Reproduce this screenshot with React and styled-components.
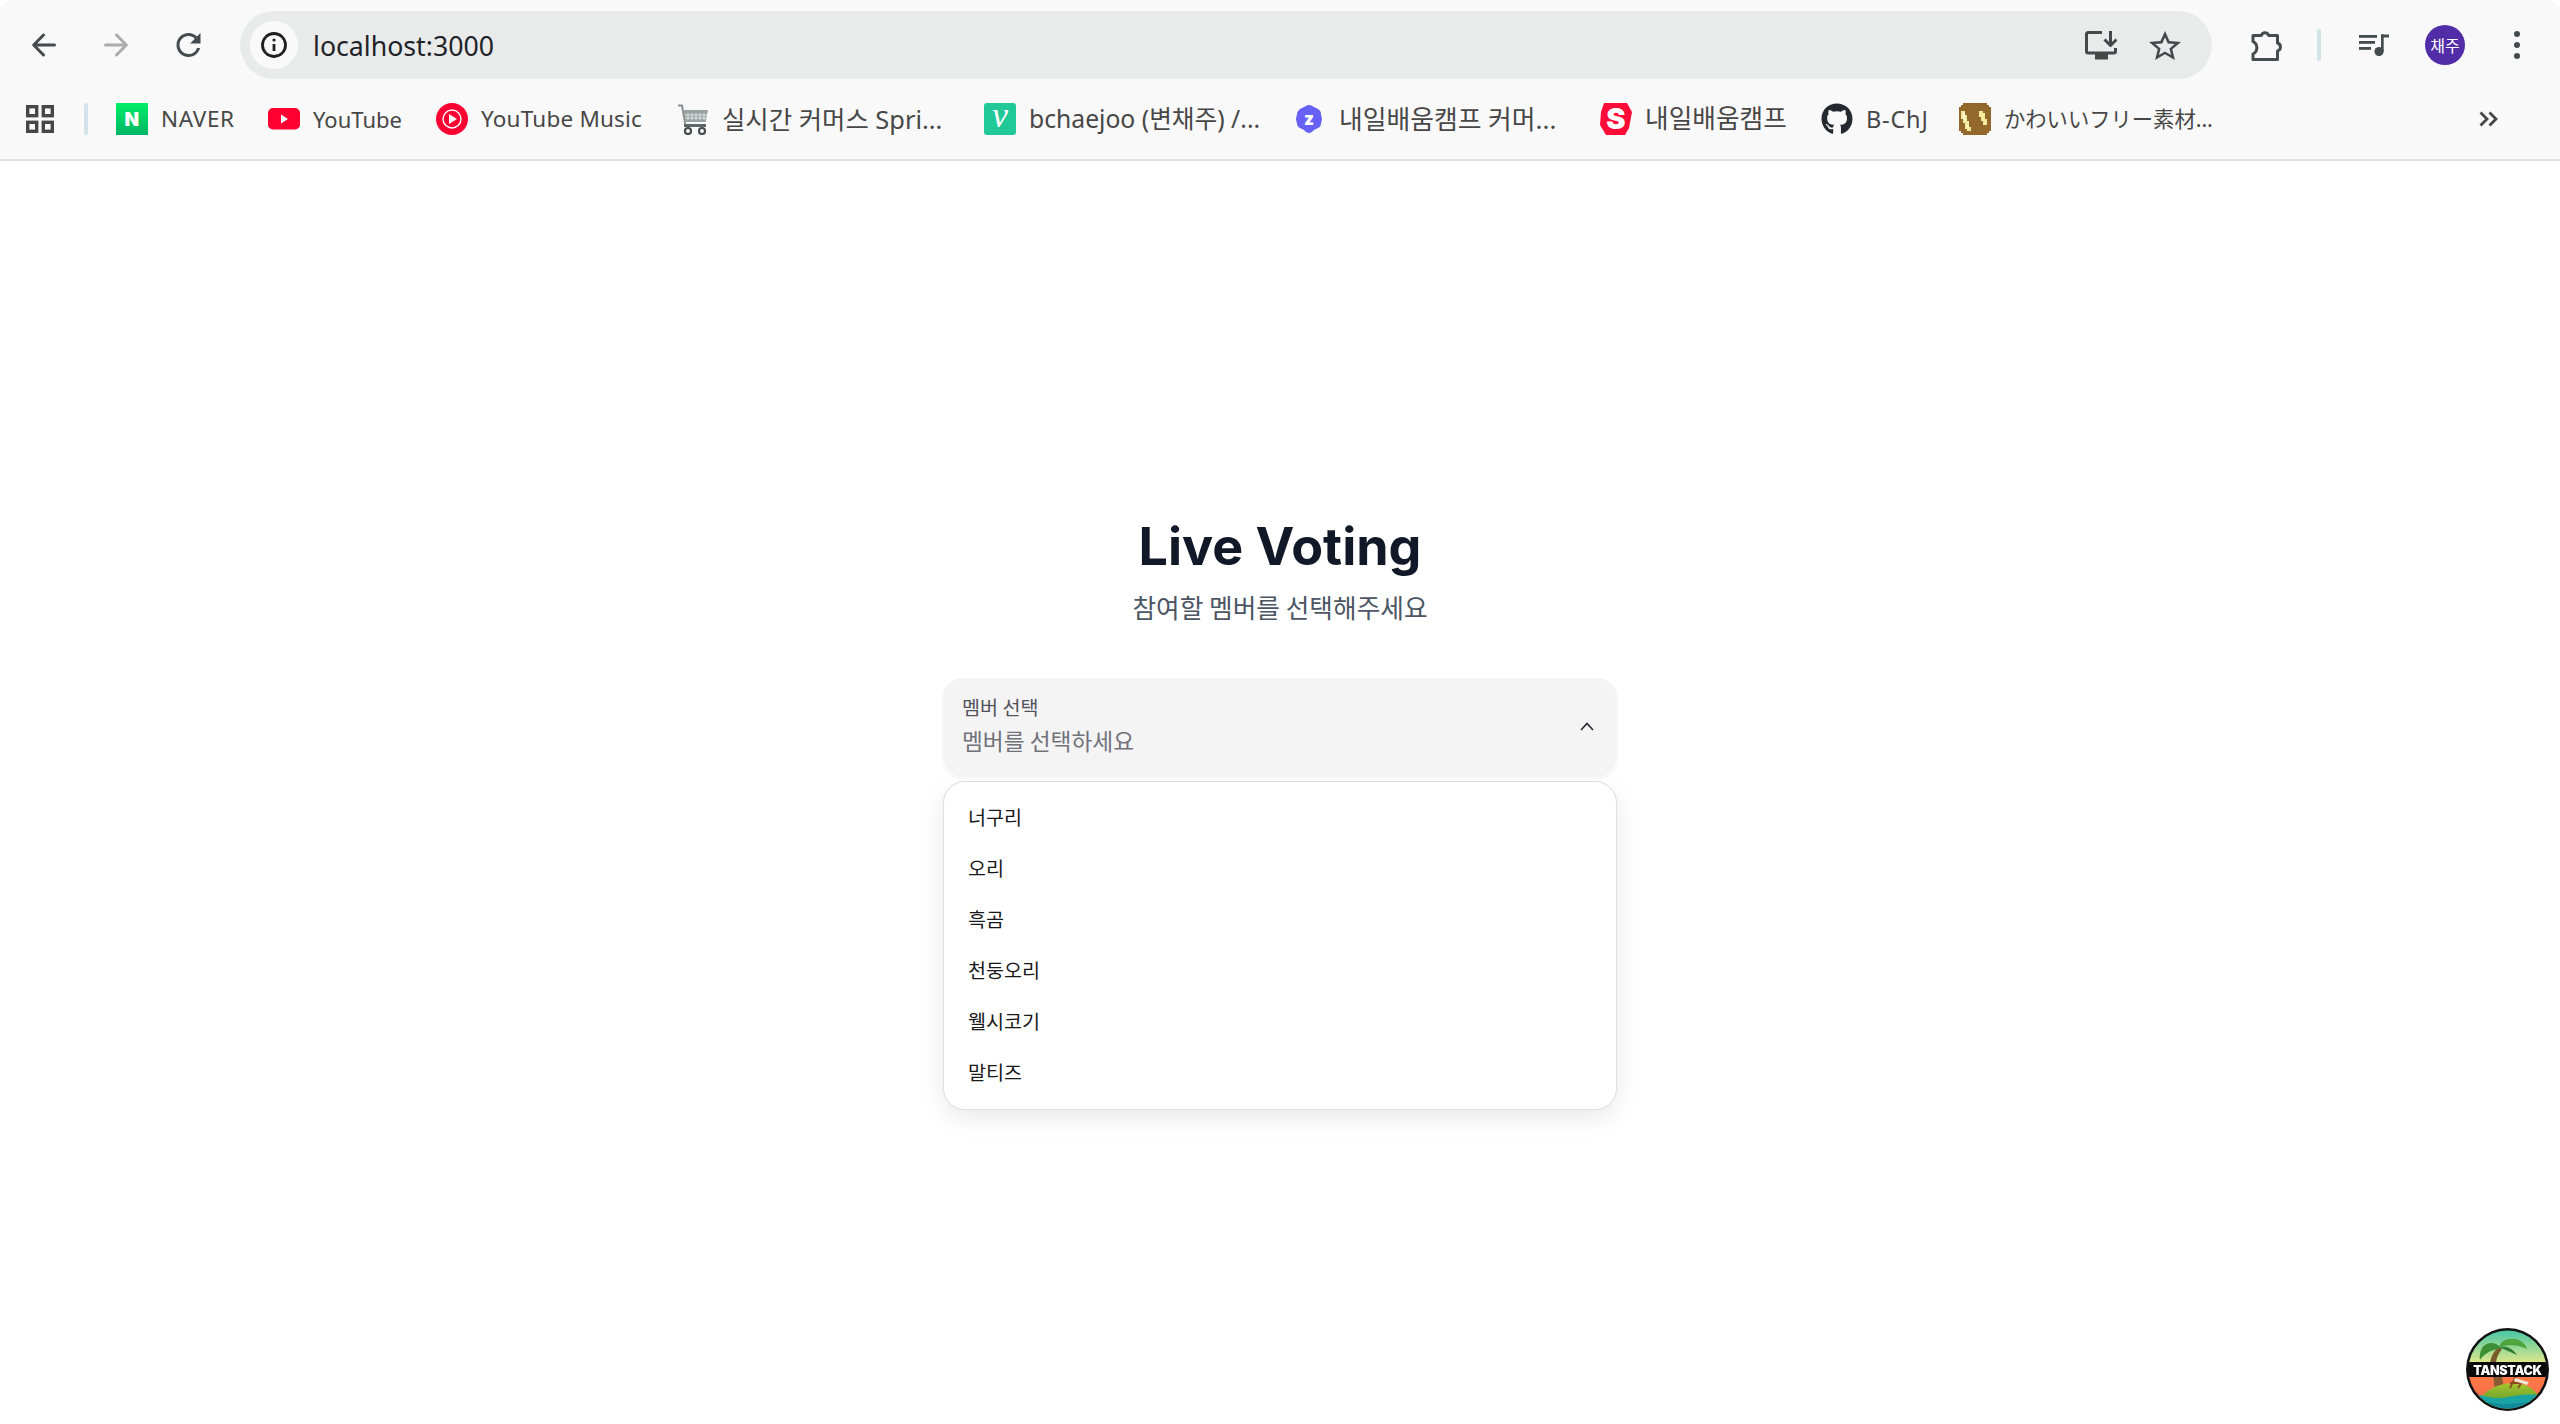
import styled, { createGlobalStyle } from "styled-components";
import { FaGithub } from "react-icons/fa";

const GlobalStyle = createGlobalStyle`
  html, body {
    margin: 0;
    padding: 0;
    background: #fff;
  }
  body {
    font-family: "Noto Sans", "Noto Sans CJK KR", sans-serif;
  }
  * {
    box-sizing: border-box;
  }
`;

const Page = styled.div`
  height: 100vh;
  overflow: hidden;
  display: flex;
  flex-direction: column;
`;

const BrowserChrome = styled.header`
  background: #f9f9f9;
  border-bottom: 2px solid #e2e2e2;
  border-radius: 12px 12px 0 0;
  height: 161px;
  flex-shrink: 0;
`;

const Toolbar = styled.div`
  height: 90px;
  display: flex;
  align-items: center;
  padding-left: 32px;
`;

const NavButton = styled.span`
  width: ${(p) => p.$width || 24}px;
  height: 24px;
  margin-right: ${(p) => p.$gap || 0}px;
  display: flex;
  color: ${(p) => (p.$disabled ? "#acacac" : "#454c4f")};
`;

const Omnibox = styled.div`
  width: 1972px;
  height: 68px;
  margin-left: 39px;
  background: #e9ebeb;
  border-radius: 34px;
  display: flex;
  align-items: center;
  padding: 0 31px 0 10px;
  color: #454749;
`;

const SiteChip = styled.span`
  width: 48px;
  height: 48px;
  border-radius: 50%;
  background: #f9f9f9;
  display: flex;
  align-items: center;
  justify-content: center;
  color: #1f1f1f;
`;

const UrlText = styled.span`
  margin-left: 15px;
  font-size: 26.7px;
  color: #1f2328;
  flex: 1;
`;

const OmniAction = styled.span`
  display: flex;
  margin-left: ${(p) => p.$gap || 0}px;
`;

const ToolbarIcon = styled.span`
  display: flex;
  align-items: center;
  color: #454c4f;
  margin-left: ${(p) => p.$gap}px;
`;

const ToolbarDivider = styled.span`
  width: 4px;
  height: 32px;
  border-radius: 2px;
  background: #d3e3e9;
  margin-left: ${(p) => p.$gap}px;
`;

const Avatar = styled.span`
  width: 40px;
  height: 40px;
  border-radius: 50%;
  background: #512da8;
  color: #fff;
  font-size: 16px;
  margin-left: 36px;
  display: flex;
  align-items: center;
  justify-content: center;
  font-family: "Noto Sans CJK KR", sans-serif;
`;

const MoreDots = styled.span`
  margin-left: 49px;
  display: flex;
  flex-direction: column;
  gap: 5px;

  i {
    width: 6px;
    height: 6px;
    border-radius: 50%;
    background: #454c4f;
  }
`;

const BookmarkBar = styled.nav`
  height: 69px;
  display: flex;
  align-items: flex-start;
  padding: 13px 0 0 26px;
  position: relative;
`;

const AppsButton = styled.span`
  display: flex;
  width: 28px;
  height: 32px;
  align-items: center;
  color: #464646;
`;

const BarDivider = styled.span`
  width: 4px;
  height: 32px;
  border-radius: 2px;
  background: #d3e3e9;
  margin: 0 28px 0 30px;
`;

const Bookmark = styled.a`
  width: ${(p) => p.$width}px;
  height: 32px;
  flex-shrink: 0;
  display: flex;
  align-items: center;
  gap: 13px;
  color: #474747;
  font-size: ${(p) => p.$size}px;
  line-height: 32px;
  white-space: nowrap;
  letter-spacing: ${(p) => p.$spacing || 0}px;
  font-family: ${(p) =>
    p.$jp
      ? '"Noto Sans", "Noto Sans CJK JP", sans-serif'
      : '"Noto Sans", "Noto Sans CJK KR", sans-serif'};
`;

const Favicon = styled.span`
  width: ${(p) => p.$width || 32}px;
  height: 32px;
  flex-shrink: 0;
  display: flex;
  align-items: center;
  color: #24292f;
`;

const LetterLogo = styled.svg`
  overflow: visible;
`;

const OverflowButton = styled.span`
  display: flex;
  margin-left: 266px;
  height: 32px;
  align-items: center;
  color: #464646;
`;

const Main = styled.main`
  flex: 1;
  display: flex;
  flex-direction: column;
  align-items: center;
  padding-top: 356px;
  font-family: Inter, "Noto Sans CJK KR", sans-serif;
`;

const Title = styled.h1`
  margin: 0;
  font-size: 52px;
  line-height: 60px;
  font-weight: 700;
  color: #111827;
`;

const Subtitle = styled.p`
  margin: 12px 0 0;
  font-size: 25.7px;
  line-height: 36px;
  color: #4b5563;
  font-family: "Noto Sans CJK KR", sans-serif;
`;

const SelectWrap = styled.div`
  width: 674px;
  margin-top: 53px;
  position: relative;
  font-family: "Noto Sans CJK KR", sans-serif;
`;

const Trigger = styled.div`
  height: 97px;
  border-radius: 20px;
  background: #f4f4f5;
  box-shadow: 0 2px 4px rgba(0, 0, 0, 0.06);
  padding: 16px 23px 0 19px;
  display: flex;
  align-items: center;
  justify-content: space-between;
`;

const TriggerText = styled.div`
  display: flex;
  flex-direction: column;
  gap: 5px;
  margin-top: -18px;
`;

const TriggerLabel = styled.span`
  font-size: 19.6px;
  line-height: 26px;
  color: #52525b;
`;

const TriggerValue = styled.span`
  font-size: 22.7px;
  line-height: 32px;
  color: #71717a;
`;

const Chevron = styled.span`
  display: flex;
  margin-top: -16px;
  color: #27272a;
`;

const Menu = styled.ul`
  position: absolute;
  top: 103px;
  left: 0;
  right: 0;
  height: 329px;
  margin: 0;
  padding: 10px 0 0 24px;
  list-style: none;
  background: #fff;
  border: 1px solid #dedee0;
  border-radius: 22px;
  box-shadow: 0 8px 24px rgba(0, 0, 0, 0.09);
`;

const MenuItem = styled.li`
  height: 51px;
  line-height: 50px;
  font-size: 19.6px;
  color: #18181b;
`;

const DevtoolsBadge = styled.button`
  position: fixed;
  right: 11px;
  bottom: 13px;
  width: 83px;
  height: 83px;
  padding: 0;
  border: 0;
  background: none;
  display: flex;
`;

const BackIcon = () => (
  <svg width="24" height="24" viewBox="0 0 24 24" fill="none" stroke="currentColor" strokeWidth="3" strokeLinecap="round" strokeLinejoin="round">
    <path d="M22.5 12H2M11.5 2 1.7 12l9.8 10" />
  </svg>
);

const ForwardIcon = () => (
  <svg width="24" height="24" viewBox="0 0 24 24" fill="none" stroke="currentColor" strokeWidth="3" strokeLinecap="round" strokeLinejoin="round">
    <path d="M1.5 12H22M12.5 2l9.8 10-9.8 10" />
  </svg>
);

const ReloadIcon = () => (
  <svg width="25" height="24" viewBox="4 4 16 16" fill="currentColor">
    <path d="M17.65 6.35A7.958 7.958 0 0 0 12 4c-4.42 0-7.99 3.58-7.99 8s3.57 8 7.99 8c3.73 0 6.84-2.55 7.73-6h-2.08A5.99 5.99 0 0 1 12 18c-3.31 0-6-2.69-6-6s2.69-6 6-6c1.66 0 3.14.69 4.22 1.78L13 11h7V4l-2.35 2.35z" />
  </svg>
);

const InfoIcon = () => (
  <svg width="26" height="26" viewBox="0 0 26 26" fill="none" stroke="currentColor">
    <circle cx="13" cy="13" r="11.5" strokeWidth="2.8" />
    <path d="M13 12v7" strokeWidth="2.8" />
    <circle cx="13" cy="8" r="1.6" fill="currentColor" stroke="none" />
  </svg>
);

const InstallIcon = () => (
  <svg width="32" height="29" viewBox="0 0 32 29" fill="none" stroke="currentColor" strokeWidth="3" strokeLinejoin="round">
    <path d="M17 1.5H3A1.5 1.5 0 0 0 1.5 3v17.5A1.5 1.5 0 0 0 3 22h26a1.5 1.5 0 0 0 1.5-1.5V17" />
    <path d="M25.5 0v14M19.5 8.5l6 6 6-6" />
    <rect x="10" y="23" width="13" height="5.5" fill="currentColor" stroke="none" />
  </svg>
);

const StarIcon = () => (
  <svg width="32" height="29" viewBox="2 2 20 19" fill="currentColor" preserveAspectRatio="none">
    <path d="M22 9.24l-7.19-.62L12 2 9.19 8.63 2 9.24l5.46 4.73L5.82 21 12 17.27 18.18 21l-1.63-7.03L22 9.24zM12 15.4l-3.76 2.27 1-4.28-3.32-2.88 4.38-.38L12 6.1l1.71 4.04 4.38.38-3.32 2.88 1 4.28L12 15.4z" />
  </svg>
);

const PuzzleIcon = () => (
  <svg width="32" height="32" viewBox="0 0 32 32" fill="none" stroke="currentColor" strokeWidth="3" strokeLinejoin="round">
    <path d="M2 6.5h8.5a3.6 3.6 0 0 1 7 0h9v7.5a4.2 4.2 0 0 1 0 8v8.5H2V25a7 7 0 0 0 0-12.5z" />
  </svg>
);

const MediaIcon = () => (
  <svg width="30" height="22" viewBox="0 0 30 22" fill="currentColor">
    <rect x="0" y="1" width="18" height="2.8" />
    <rect x="0" y="7" width="16" height="2.8" />
    <rect x="0" y="13" width="12" height="2.8" />
    <circle cx="20" cy="17.5" r="4.6" />
    <rect x="22" y="0.5" width="2.7" height="17" />
    <rect x="22" y="0.5" width="8" height="3" />
  </svg>
);

const AppsIcon = () => (
  <svg width="28" height="28" viewBox="0 0 28 28" fill="none" stroke="currentColor" strokeWidth="3.4">
    <rect x="1.7" y="1.7" width="9" height="9" />
    <rect x="17.3" y="1.7" width="9" height="9" />
    <rect x="1.7" y="17.3" width="9" height="9" />
    <rect x="17.3" y="17.3" width="9" height="9" />
  </svg>
);

const OverflowIcon = () => (
  <svg width="20" height="16" viewBox="0 0 20 16" fill="none" stroke="currentColor" strokeWidth="2.8">
    <path d="M1.5 1.5 8 8l-6.5 6.5M10.5 1.5 17 8l-6.5 6.5" />
  </svg>
);

const ChevronUpIcon = () => (
  <svg width="14" height="9" viewBox="0 0 14 9" fill="none" stroke="currentColor" strokeWidth="1.6">
    <path d="M1 8l6-6.5L13 8" />
  </svg>
);

const NaverIcon = () => (
  <svg width="32" height="32" viewBox="0 0 32 32">
    <defs>
      <linearGradient id="naver" x1="0" y1="0" x2="0" y2="1">
        <stop offset="0" stopColor="#00ee68" />
        <stop offset="1" stopColor="#00b564" />
      </linearGradient>
    </defs>
    <rect width="32" height="32" fill="url(#naver)" />
    <text x="16" y="23" textAnchor="middle" fontSize="19" fontWeight="900" fill="#fff" fontFamily="Inter, sans-serif">N</text>
  </svg>
);

const YoutubeIcon = () => (
  <svg width="32" height="22" viewBox="0 0 32 22">
    <rect width="32" height="21.5" rx="5" fill="#ff0033" />
    <path d="M13 6.5v9l7-4.5z" fill="#fff" />
  </svg>
);

const YoutubeMusicIcon = () => (
  <svg width="32" height="32" viewBox="0 0 32 32">
    <circle cx="16" cy="16" r="16" fill="#ff0033" />
    <circle cx="16" cy="16" r="9" fill="none" stroke="#fff" strokeWidth="1.4" />
    <path d="M13 11v10l8-5z" fill="#fff" />
  </svg>
);

const CartIcon = () => (
  <svg width="32" height="31" viewBox="0 0 32 31">
    <path d="M1 1.5h4l3.5 20h20" fill="none" stroke="#8a9090" strokeWidth="2" />
    <path d="M6.5 6H31l-2.5 12H8.5z" fill="#9aa3a3" />
    <path d="M11 9v7M15 9v7M19 9v7M23 9v7M27 9v7M8 11h22M8 14h21" stroke="#dde2e2" strokeWidth="1" />
    <rect x="7" y="20" width="22" height="3" fill="#5f6666" />
    <circle cx="11" cy="27" r="3" fill="#fff" stroke="#454c4c" strokeWidth="2.2" />
    <circle cx="25" cy="27" r="3" fill="#fff" stroke="#454c4c" strokeWidth="2.2" />
  </svg>
);

const VelogIcon = () => (
  <LetterLogo width="32" height="32" viewBox="0 0 32 32">
    <rect width="32" height="32" rx="3" fill="#20c997" />
    <text x="16" y="24" textAnchor="middle" fontSize="36" fontStyle="italic" fill="#fff" fontFamily='"Liberation Serif", serif'>v</text>
  </LetterLogo>
);

const ZepIcon = () => (
  <svg width="26" height="28" viewBox="0 0 26 28">
    <path d="M13 0c3 0 4 2 7 3s5 3 5 6 1 3 1 5-1 3-1 5-2 4-5 5-4 4-7 4-4-3-7-4-5-3-5-5-1-3-1-5 1-3 1-5 2-5 5-6 4-3 7-3z" fill="#6760f5" />
    <text x="13" y="20" textAnchor="middle" fontSize="17" fontWeight="900" fill="#fff" fontFamily="Inter, sans-serif">z</text>
  </svg>
);

const SpartaIcon = () => (
  <LetterLogo width="32" height="32" viewBox="0 0 32 32">
    <path d="M4 0h23l5 9-3 16-4 7H6L0 22l1-13z" fill="#ff0b37" />
    <text x="16" y="26" textAnchor="middle" fontSize="29" fontWeight="900" fill="#fff" fontFamily="Inter, sans-serif">S</text>
  </LetterLogo>
);

const PixelIcon = () => (
  <svg width="32" height="32" viewBox="0 0 16 16" shapeRendering="crispEdges">
    <path d="M2 0h12v1h1v1h1v12h-1v1h-1v1H2v-1H1v-1H0V2h1V1h1z" fill="#92692b" />
    <path d="M1 4h2v2h1v3h1v3h1v2H4v-1H3v-3H2V8H1z" fill="#f7ea9c" />
    <path d="M2 5h1v3h1v3h1v1H4V9H3V8H2z" fill="#fffbe0" />
    <path d="M10 4h2v1h1v3h1v3h-2V9h-1V7h-1z" fill="#f7ea9c" />
  </svg>
);

const TanstackLogo = () => (
  <svg width="83" height="83" viewBox="0 0 83 83">
    <defs>
      <linearGradient id="sky" x1="0" y1="0" x2="0" y2="1">
        <stop offset="0" stopColor="#3cc4a6" />
        <stop offset="1" stopColor="#e3e88a" />
      </linearGradient>
      <linearGradient id="sunset" x1="0" y1="0" x2="0" y2="1">
        <stop offset="0" stopColor="#ff7a45" />
        <stop offset="1" stopColor="#f7644f" />
      </linearGradient>
      <linearGradient id="island" x1="0" y1="0" x2="0" y2="1">
        <stop offset="0" stopColor="#a6c52e" />
        <stop offset="1" stopColor="#4c8f2c" />
      </linearGradient>
      <clipPath id="disc">
        <circle cx="41.5" cy="41.5" r="39" />
      </clipPath>
    </defs>
    <circle cx="41.5" cy="41.5" r="41.5" fill="#111" />
    <g clipPath="url(#disc)">
      <rect width="83" height="36" fill="url(#sky)" />
      <rect y="48" width="83" height="35" fill="url(#sunset)" />
      <path d="M24 36c1-9 5-14 9-17l3 2c-3 4-6 9-6 15z" fill="#7a5a2a" />
      <path d="M34 19c-5-6-14-5-18 1-2 4-3 8-2 12 4-6 10-10 19-11z" fill="#3c8f35" />
      <path d="M33 19c2-8 12-10 20-7 4 2 7 5 8 9-8-4-17-5-28-2z" fill="#4da53c" />
      <path d="M33 19c6-2 14 1 18 8-6-3-12-5-18-8z" fill="#2f7c32" />
      <path d="M27 48h9l2 14h-9z" fill="#8a5a33" />
      <path d="M12 72c8-10 20-17 36-17 10 0 18 4 24 12v16H12z" fill="url(#island)" />
      <path d="M0 68c12-4 22 3 34 2s24-6 49-2v15H0z" fill="#1aa3a3" />
      <path d="M8 75c12-3 22 2 34 1s20-3 34-1v8H8z" fill="#128a9a" />
      <path d="M44 60l6-12M52 60l4-6M44 55h18" stroke="#8a4b24" strokeWidth="1.8" fill="none" />
      <path d="M49 50l14 4-2 3-13-4z" fill="#f6e3d0" />
    </g>
    <rect y="34" width="83" height="15" fill="#0a0a0a" clipPath="url(#disc)" />
    <text x="41.5" y="46.5" textAnchor="middle" fontSize="12.5" fontWeight="900" fill="#fff" fontFamily="Inter, sans-serif" letterSpacing="-0.3">TANSTACK</text>
  </svg>
);

const bookmarks = [
  { name: "NAVER", width: 152, size: 22.5, spacing: 0.6, icon: <NaverIcon /> },
  { name: "YouTube", width: 168, size: 22, icon: <YoutubeIcon /> },
  { name: "YouTube Music", width: 241, size: 22.5, spacing: 0.2, icon: <YoutubeMusicIcon /> },
  { name: "실시간 커머스 Spri...", width: 307, size: 25.4, icon: <CartIcon /> },
  { name: "bchaejoo (변채주) /...", width: 312, size: 24.7, icon: <VelogIcon /> },
  { name: "내일배움캠프 커머...", width: 304, size: 25.8, icon: <ZepIcon />, iconWidth: 30 },
  { name: "내일배움캠프", width: 221, size: 25.7, icon: <SpartaIcon /> },
  { name: "B-ChJ", width: 138, size: 23.5, spacing: 0.8, icon: <FaGithub size={32} /> },
  { name: "かわいいフリー素材...", width: 254, size: 21.3, icon: <PixelIcon />, jp: true },
];

const members = ["너구리", "오리", "흑곰", "천둥오리", "웰시코기", "말티즈"];

const App = () => {
  return (
    <Page>
      <GlobalStyle />
      <BrowserChrome>
        <Toolbar>
          <NavButton $gap={48}>
            <BackIcon />
          </NavButton>
          <NavButton $disabled $gap={48}>
            <ForwardIcon />
          </NavButton>
          <NavButton $width={25}>
            <ReloadIcon />
          </NavButton>
          <Omnibox>
            <SiteChip>
              <InfoIcon />
            </SiteChip>
            <UrlText>localhost:3000</UrlText>
            <OmniAction>
              <InstallIcon />
            </OmniAction>
            <OmniAction $gap={32}>
              <StarIcon />
            </OmniAction>
          </Omnibox>
          <ToolbarIcon $gap={39}>
            <PuzzleIcon />
          </ToolbarIcon>
          <ToolbarDivider $gap={34} />
          <ToolbarIcon $gap={38}>
            <MediaIcon />
          </ToolbarIcon>
          <Avatar>채주</Avatar>
          <MoreDots>
            <i />
            <i />
            <i />
          </MoreDots>
        </Toolbar>
        <BookmarkBar>
          <AppsButton>
            <AppsIcon />
          </AppsButton>
          <BarDivider />
          {bookmarks.map((b) => (
            <Bookmark key={b.name} $width={b.width} $size={b.size} $spacing={b.spacing} $jp={b.jp}>
              <Favicon $width={b.iconWidth}>{b.icon}</Favicon>
              {b.name}
            </Bookmark>
          ))}
          <OverflowButton>
            <OverflowIcon />
          </OverflowButton>
        </BookmarkBar>
      </BrowserChrome>
      <Main>
        <Title>Live Voting</Title>
        <Subtitle>참여할 멤버를 선택해주세요</Subtitle>
        <SelectWrap>
          <Trigger>
            <TriggerText>
              <TriggerLabel>멤버 선택</TriggerLabel>
              <TriggerValue>멤버를 선택하세요</TriggerValue>
            </TriggerText>
            <Chevron>
              <ChevronUpIcon />
            </Chevron>
          </Trigger>
          <Menu>
            {members.map((m) => (
              <MenuItem key={m}>{m}</MenuItem>
            ))}
          </Menu>
        </SelectWrap>
      </Main>
      <DevtoolsBadge>
        <TanstackLogo />
      </DevtoolsBadge>
    </Page>
  );
};

export default App;
